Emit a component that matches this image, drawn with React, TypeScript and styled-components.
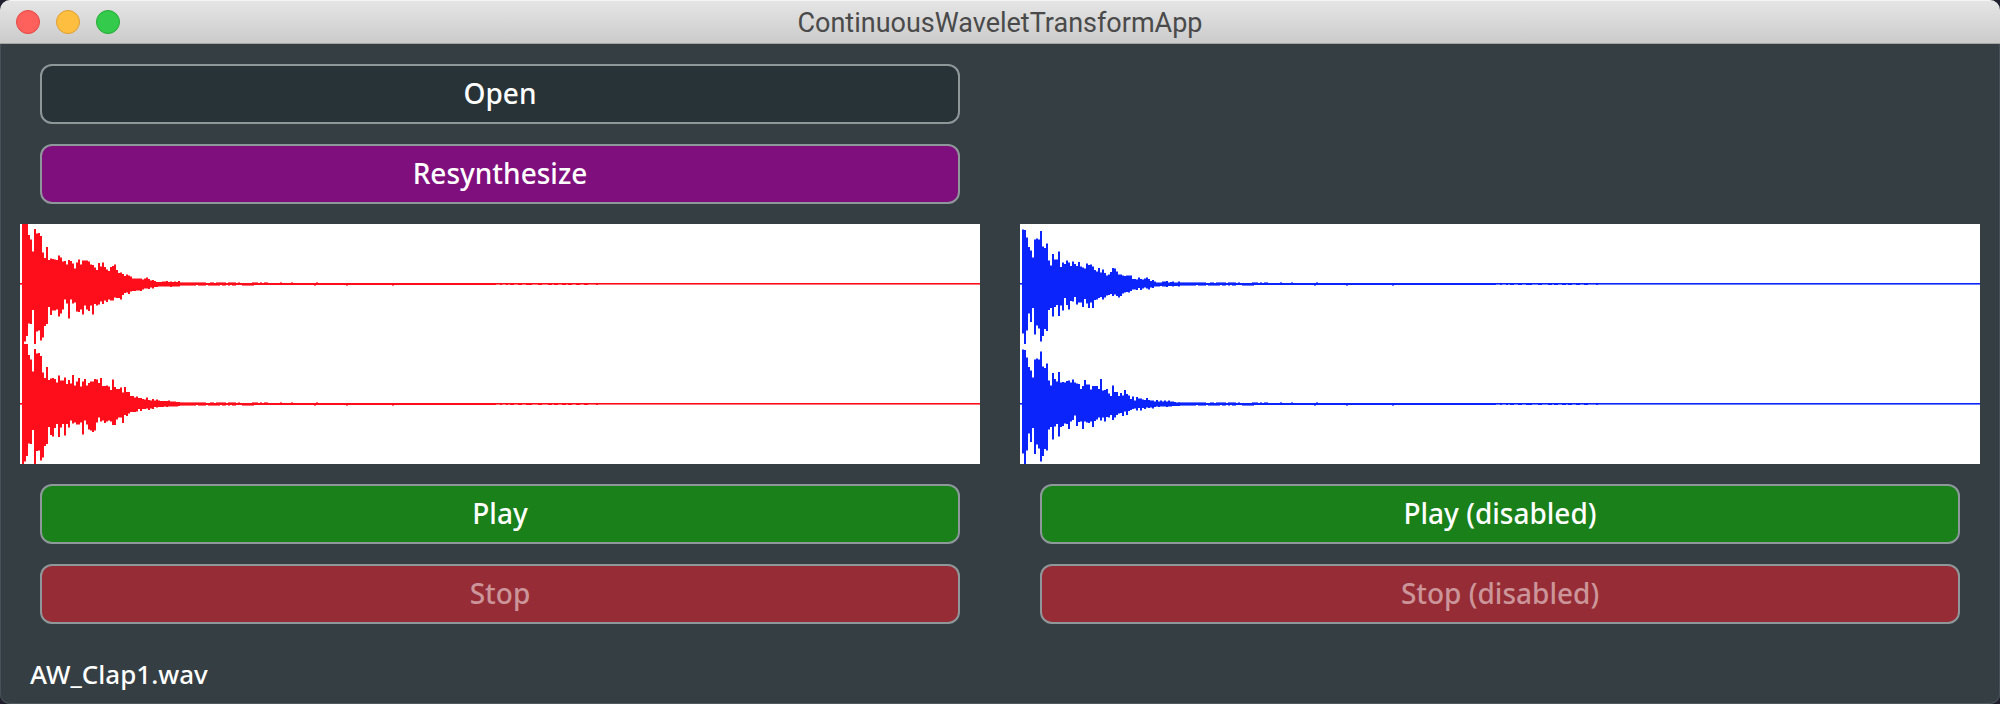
import React from "react";
import styled, { createGlobalStyle } from "styled-components";

const GlobalStyle = createGlobalStyle`
  * { box-sizing: border-box; }
  body { margin: 0; background: #1f1f2d; }
`;

const uiFont = `"Noto Sans", "Open Sans", sans-serif`;

const Window = styled.div`
  display: flex;
  flex-direction: column;
  min-height: 100vh;
  border-radius: 10px;
  overflow: hidden;
  background: #343e43;
  box-shadow: inset 1px 0 #465056, inset -1px 0 #465056, inset 0 -1px #50595e;
  color: #fff;
  font-family: ${uiFont};
`;

const TitleBar = styled.header`
  display: grid;
  grid-template-columns: 1fr auto 1fr;
  align-items: center;
  height: 44px;
  padding: 0 16px;
  border-top: 1px solid #f4f4f4;
  border-bottom: 1px solid #a5a5a5;
  background: linear-gradient(#e5e5e5, #cbcbcb);
`;

const WindowControls = styled.div`
  display: flex;
  gap: 16px;
`;

const ControlDot = styled.button<{ $fill: string; $edge: string }>`
  width: 24px;
  height: 24px;
  padding: 0;
  border: 1px solid ${(p) => p.$edge};
  border-radius: 50%;
  background: ${(p) => p.$fill};
`;

const Title = styled.h1`
  margin: 0;
  padding-top: 2px;
  color: #4a4a4a;
  font: 400 27px/36px Roboto, sans-serif;
`;

const Panes = styled.main`
  display: grid;
  grid-template-columns: 1fr 1fr;
  column-gap: 40px;
  padding: 20px 20px 0;
`;

const Pane = styled.section`
  display: flex;
  flex-direction: column;
  justify-content: flex-end;
  gap: 20px;
`;

const ActionButton = styled.button<{ $fill: string }>`
  height: 60px;
  margin: 0 20px;
  padding: 0 0 2px;
  border: 2px solid #8e989b;
  border-radius: 12px;
  background: ${(p) => p.$fill};
  color: #fff;
  font: 500 28px/36px ${uiFont};

  &:disabled {
    color: #cb959a;
  }
`;

const WaveView = styled.svg`
  display: block;
  width: 100%;
  height: 240px;
  background: #fff;
`;

const FileName = styled.p`
  margin: auto 0 0;
  padding: 12px 30px;
  font: 500 26px/36px ${uiFont};
`;

const colors = {
  open: "#283337",
  resynthesize: "#800f7e",
  play: "#19801a",
  stop: "#962d36",
};

/* Peak positions are stored in thirds of a pixel; the zero line is at 207. */
const ZERO = 207;
const UNITS = 3;
const COLUMN = 2;
const CHANNEL_HEIGHT = 120;

type Channel = { tops: number[]; bottoms: number[] };

const originalLeft: Channel = {
  tops: [27, 27, 27, 60, 73, 110, 42, 56, 54, 63, 112, 129, 96, 135, 130, 132, 133, 135, 121, 127, 140, 138, 148, 135, 138, 146, 161, 142, 133, 148, 136, 136, 136, 139, 148, 150, 157, 165, 144, 155, 142, 156, 163, 168, 156, 153, 148, 165, 174, 172, 177, 183, 178, 181, 184, 190, 190, 190, 190, 190, 193, 191, 187, 192, 196, 195, 198, 201, 201, 201, 199, 200, 198, 201, 199, 201, 200, 201, 198],
  bottoms: [387, 380, 363, 325, 327, 285, 387, 350, 347, 377, 367, 333, 327, 276, 300, 287, 287, 283, 304, 295, 283, 254, 266, 311, 254, 265, 262, 290, 291, 283, 298, 271, 283, 288, 271, 298, 267, 272, 268, 259, 267, 256, 261, 254, 256, 256, 247, 249, 249, 254, 240, 234, 232, 237, 229, 228, 228, 226, 226, 228, 223, 220, 220, 222, 217, 220, 216, 216, 214, 214, 215, 214, 214, 214, 216, 214, 214, 214, 214],
};

const originalRight: Channel = {
  tops: [27, 27, 27, 60, 73, 110, 42, 56, 54, 63, 112, 129, 96, 135, 130, 129, 132, 143, 121, 136, 136, 127, 147, 135, 145, 120, 151, 139, 129, 155, 139, 132, 151, 144, 139, 139, 132, 133, 144, 129, 153, 153, 151, 155, 165, 133, 156, 162, 162, 157, 172, 156, 171, 171, 183, 183, 187, 184, 189, 189, 192, 193, 188, 195, 197, 192, 197, 193, 197, 198, 198, 198, 198, 196, 199, 199, 199, 201, 201],
  bottoms: [387, 380, 363, 325, 327, 285, 387, 348, 347, 377, 367, 333, 327, 276, 300, 304, 279, 267, 306, 277, 267, 302, 267, 277, 256, 265, 262, 268, 268, 262, 299, 256, 268, 283, 286, 291, 286, 262, 247, 259, 256, 264, 259, 256, 259, 270, 270, 253, 248, 247, 264, 240, 243, 236, 231, 231, 231, 229, 222, 228, 222, 222, 220, 225, 220, 222, 216, 218, 216, 216, 216, 214, 216, 214, 214, 214, 214, 214, 213],
};

const resynthLeft: Channel = {
  tops: [43, 45, 67, 96, 106, 128, 73, 70, 73, 48, 94, 99, 85, 136, 152, 117, 133, 133, 109, 156, 142, 147, 136, 142, 153, 139, 147, 153, 141, 155, 157, 160, 145, 150, 148, 154, 165, 170, 159, 172, 163, 174, 181, 179, 171, 159, 160, 169, 178, 178, 181, 183, 182, 181, 181, 192, 192, 193, 187, 192, 193, 191, 187, 192, 198, 195, 199, 202, 202, 202, 200, 200, 198, 202, 201, 199, 202, 202, 199],
  bottoms: [355, 387, 347, 295, 321, 279, 359, 331, 340, 380, 363, 342, 348, 285, 279, 304, 276, 270, 303, 271, 287, 249, 270, 283, 258, 260, 246, 269, 262, 262, 276, 252, 265, 279, 262, 279, 255, 253, 249, 246, 254, 248, 242, 240, 237, 243, 239, 243, 248, 243, 235, 232, 231, 232, 228, 223, 223, 225, 219, 225, 220, 217, 220, 224, 217, 219, 214, 214, 214, 213, 215, 214, 216, 213, 213, 215, 213, 213, 215],
};

const resynthRight: Channel = {
  tops: [43, 45, 67, 96, 106, 128, 73, 70, 73, 49, 94, 99, 86, 136, 152, 114, 132, 139, 111, 143, 141, 143, 138, 137, 143, 133, 142, 145, 147, 162, 153, 135, 148, 148, 164, 153, 153, 153, 162, 132, 166, 165, 162, 176, 183, 151, 171, 171, 183, 174, 181, 165, 177, 181, 192, 185, 196, 186, 190, 191, 193, 195, 189, 195, 197, 197, 200, 195, 199, 197, 199, 197, 199, 197, 199, 200, 201, 203, 203],
  bottoms: [355, 387, 347, 295, 321, 279, 357, 328, 340, 380, 363, 342, 347, 283, 276, 314, 274, 267, 304, 276, 273, 265, 267, 282, 259, 255, 241, 273, 261, 259, 282, 260, 262, 264, 260, 276, 258, 253, 247, 256, 247, 260, 246, 247, 240, 255, 247, 240, 235, 234, 243, 229, 240, 228, 225, 222, 220, 227, 219, 226, 219, 222, 217, 219, 217, 221, 216, 214, 216, 215, 215, 214, 216, 214, 214, 213, 213, 213, 213],
};

/* Stepped outline: out along the upper peaks, back along the lower ones. */
function outline({ tops, bottoms }: Channel, zeroY: number) {
  const y = (v: number) => zeroY + Math.round(((v - ZERO) / UNITS) * 2) / 2;
  const out = tops.map((t) => `V${y(t)}h${COLUMN}`).join("");
  const back = [...bottoms].reverse().map((b) => `V${y(b)}h-${COLUMN}`).join("");
  return `M2 ${zeroY}${out}${back}Z`;
}

/* Faint runs above and below the line as the sound dies away: [start, length]. */
const upperTail = [[158, 28], [190, 4], [196, 10], [208, 8], [218, 2], [232, 6], [240, 2], [244, 4], [260, 2], [271, 2], [296, 2]];
const lowerTail = [[158, 18], [178, 8], [188, 12], [202, 4], [208, 2], [212, 4], [222, 12], [294, 2], [326, 2], [372, 2]];
const quietGaps = [[476, 4], [482, 4], [488, 2], [494, 4], [502, 4], [512, 6], [522, 6], [532, 2], [538, 4], [546, 2], [552, 4], [560, 4], [568, 8]];

const runs = (list: number[][], y: number) => list.map(([x, w]) => `M${x} ${y}h${w}v1h-${w}z`).join("");

function Waveform({ label, color, channels }: { label: string; color: string; channels: Channel[] }) {
  return (
    <WaveView viewBox="0 0 960 240" preserveAspectRatio="none" role="img" aria-label={label}>
      {channels.map((channel, i) => {
        const zero = CHANNEL_HEIGHT * i + CHANNEL_HEIGHT / 2;
        return (
          <g key={i} fill={color}>
            <path d={outline(channel, zero)} />
            <rect x="0" y={zero - 1} width="960" height="1" />
            <rect x="158" y={zero} width="420" height="1" />
            <rect x="0" y={zero} width="2" height="1" opacity="0.6" />
            <rect x="578" y={zero} width="382" height="1" opacity="0.6" />
            <path d={runs(upperTail, zero - 2) + runs(lowerTail, zero + 1)} opacity="0.6" />
            <path d={runs(quietGaps, zero)} fill="#fff" opacity="0.4" />
          </g>
        );
      })}
    </WaveView>
  );
}

export default function App() {
  return (
    <>
      <GlobalStyle />
      <Window>
        <TitleBar>
          <WindowControls>
            <ControlDot $fill="#fe605b" $edge="#e34640" aria-label="Close" />
            <ControlDot $fill="#febf40" $edge="#df9e33" aria-label="Minimize" />
            <ControlDot $fill="#34ca4b" $edge="#24aa35" aria-label="Zoom" />
          </WindowControls>
          <Title>ContinuousWaveletTransformApp</Title>
        </TitleBar>
        <Panes>
          <Pane>
            <ActionButton $fill={colors.open}>Open</ActionButton>
            <ActionButton $fill={colors.resynthesize}>Resynthesize</ActionButton>
            <Waveform label="Original audio" color="#fe0d1b" channels={[originalLeft, originalRight]} />
            <ActionButton $fill={colors.play}>Play</ActionButton>
            <ActionButton $fill={colors.stop} disabled>Stop</ActionButton>
          </Pane>
          <Pane>
            <Waveform label="Resynthesized audio" color="#0b24fb" channels={[resynthLeft, resynthRight]} />
            <ActionButton $fill={colors.play}>Play (disabled)</ActionButton>
            <ActionButton $fill={colors.stop} disabled>Stop (disabled)</ActionButton>
          </Pane>
        </Panes>
        <FileName>AW_Clap1.wav</FileName>
      </Window>
    </>
  );
}
